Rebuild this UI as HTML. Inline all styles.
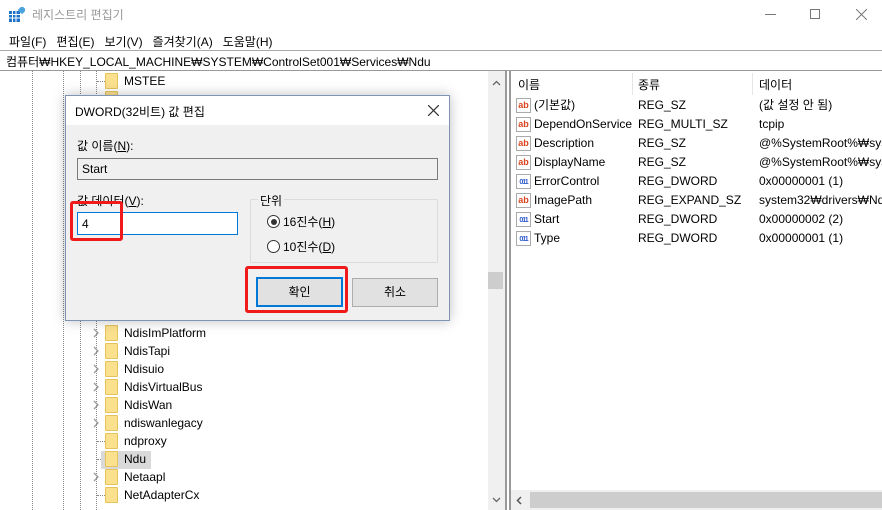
<!DOCTYPE html><html><head><meta charset="utf-8"><style>
*{margin:0;padding:0;box-sizing:border-box}
body{width:882px;height:510px;overflow:hidden;background:#fff;font-family:"Liberation Sans","Noto Sans CJK KR",sans-serif;font-size:12px;color:#000;position:relative}
.a{position:absolute;white-space:nowrap}
.g{color:#999}
.row{position:absolute;height:18px;line-height:18px;white-space:nowrap}
.fold{position:absolute;width:13px;height:16px;background:#fbe08e;border:1px solid #e6c25a;border-radius:1px}
.chev{position:absolute;width:8px;height:10px}
.dv{position:absolute;border-left:1px dotted #888;top:71px;height:439px;width:0}
.ico{position:absolute;width:15px;height:15px;font-size:9px;font-weight:bold;line-height:13px;text-align:center;border:1px solid #aaa;background:#fff}
</style></head><body>
<svg class="a" style="left:9px;top:7px" width="16" height="16"><rect x="0" y="4" width="11" height="11" fill="#1f73c8"/><path d="M0 7.5H11M0 11H11M3.5 4V15M7 4V15" stroke="#fff"/><rect x="10" y="0" width="6" height="6" fill="#4aa3df" transform="rotate(45 13 3)"/></svg>
<div class="a g" style="left:32px;top:6px;font-size:12px">레지스트리 편집기</div>
<div class="a" style="left:765px;top:14px;width:11px;border-top:1px solid #777"></div>
<div class="a" style="left:810px;top:9px;width:10px;height:10px;border:1px solid #777"></div>
<svg class="a" style="left:856px;top:9px" width="11" height="11"><path d="M0 0L11 11M11 0L0 11" stroke="#777"/></svg>
<div class="a" style="left:9px;top:33px">파일(F) &nbsp;&nbsp;편집(E) &nbsp;&nbsp;보기(V) &nbsp;&nbsp;즐겨찾기(A) &nbsp;&nbsp;도움말(H)</div>
<div class="a" style="left:0;top:50px;width:882px;height:1px;background:#aaa"></div>
<div class="a" style="left:6px;top:53px">컴퓨터₩HKEY_LOCAL_MACHINE₩SYSTEM₩ControlSet001₩Services₩Ndu</div>
<div class="a" style="left:0;top:70px;width:882px;height:1px;background:#999"></div>
<div class="dv" style="left:32px"></div><div class="dv" style="left:63px"></div><div class="dv" style="left:80px"></div><div class="dv" style="left:96px"></div>
<div class="a" style="left:505px;top:71px;width:2px;height:439px;background:#999"></div>
<div class="a" style="left:488px;top:71px;width:17px;height:439px;background:#f0f0f0"></div>
<div class="a" style="left:488px;top:272px;width:15px;height:17px;background:#cdcdcd"></div>
<svg class="a" style="left:492px;top:80px" width="9" height="6"><path d="M1 5L4.5 1.5L8 5" stroke="#666" fill="none" stroke-width="1.3"/></svg>
<svg class="a" style="left:492px;top:497px" width="9" height="6"><path d="M1 1L4.5 4.5L8 1" stroke="#666" fill="none" stroke-width="1.3"/></svg>
<div class="a" style="left:97px;top:81px;width:8px;border-top:1px dotted #888"></div>
<div class="fold" style="left:105px;top:73px"></div><div class="row" style="left:124px;top:72px">MSTEE</div>
<div class="fold" style="left:105px;top:91px"></div>
<div id="tree"></div>
<div class="a" style="left:509px;top:71px;width:2px;height:439px;background:#999"></div>
<div class="a" style="left:632px;top:73px;width:1px;height:22px;background:#e5e5e5"></div>
<div class="a" style="left:752px;top:73px;width:1px;height:22px;background:#e5e5e5"></div>
<div class="a" style="left:518px;top:76px">이름</div><div class="a" style="left:638px;top:76px">종류</div><div class="a" style="left:759px;top:76px">데이터</div>
<div id="rows"></div>
<div class="a" style="left:511px;top:490px;width:371px;height:20px;background:#f0f0f0"></div>
<div class="a" style="left:530px;top:492px;width:352px;height:16px;background:#cdcdcd"></div>
<svg class="a" style="left:516px;top:496px" width="6" height="9"><path d="M5 1L1.5 4.5L5 8" stroke="#555" fill="none" stroke-width="1.5"/></svg>
<div class="a" style="left:65px;top:95px;width:385px;height:226px;background:#f0f0f0;border:1px solid #7f93b5;box-shadow:0 0 12px rgba(0,0,0,.25)"></div>
<div class="a" style="left:66px;top:96px;width:383px;height:29px;background:#fff"></div>
<div class="a" style="left:75px;top:103px;font-size:12px">DWORD(32비트) 값 편집</div>
<svg class="a" style="left:428px;top:105px" width="11" height="11"><path d="M0 0L11 11M11 0L0 11" stroke="#333" stroke-width="1.2"/></svg>
<div class="a" style="left:77px;top:137px">값 이름(<u>N</u>):</div>
<div class="a" style="left:77px;top:158px;width:361px;height:22px;border:1px solid #7a7a7a;background:#f0f0f0;padding:3px 4px">Start</div>
<div class="a" style="left:77px;top:192px">값 데이터(<u>V</u>):</div>
<div class="a" style="left:77px;top:212px;width:161px;height:23px;border:1px solid #0078d7;background:#fff;padding:4px 4px">4</div>
<div class="a" style="left:70px;top:201px;width:53px;height:40px;border:3px solid #f01a1a;border-radius:3px"></div>
<div class="a" style="left:250px;top:199px;width:188px;height:64px;border:1px solid #dcdcdc"></div>
<div class="a" style="left:258px;top:192px;background:#f0f0f0;padding:0 2px">단위</div>
<div class="a" style="left:267px;top:215px;width:13px;height:13px;border:1px solid #333;border-radius:50%;background:#fff"><div style="margin:2.5px;width:6px;height:6px;border-radius:50%;background:#333"></div></div>
<div class="a" style="left:283px;top:213px">16진수(<u>H</u>)</div>
<div class="a" style="left:267px;top:240px;width:13px;height:13px;border:1px solid #333;border-radius:50%;background:#fff"></div>
<div class="a" style="left:283px;top:238px">10진수(<u>D</u>)</div>
<div class="a" style="left:245px;top:266px;width:103px;height:47px;border:3px solid #f01a1a;border-radius:3px"></div>
<div class="a" style="left:256px;top:277px;width:87px;height:30px;border:2px solid #0078d7;background:#e1e1e1;text-align:center;line-height:26px">확인</div>
<div class="a" style="left:352px;top:278px;width:86px;height:29px;border:1px solid #adadad;background:#e1e1e1;text-align:center;line-height:27px">취소</div>
<script>
var t=[["NdisImPlatform",1],["NdisTapi",1],["Ndisuio",1],["NdisVirtualBus",1],["NdisWan",1],["ndiswanlegacy",1],["ndproxy",0],["Ndu",0],["Netaapl",1],["NetAdapterCx",0]];
var h="";t.forEach(function(r,i){var y=324+i*18;
if(r[1])h+='<svg class="chev" style="left:92px;top:'+(y+4)+'px" width="8" height="10"><path d="M2 1L6 5L2 9" stroke="#999" fill="none" stroke-width="1.3"/></svg>';
else h+='<div class="a" style="left:97px;top:'+(y+9)+'px;width:8px;border-top:1px dotted #888"></div>';
if(r[0]=="Ndu")h+='<div class="a" style="left:101px;top:'+(y+1)+'px;width:50px;height:18px;background:#d9d9d9"></div>';
h+='<div class="fold" style="left:105px;top:'+(y+1)+'px"></div><div class="row" style="left:124px;top:'+y+'px">'+r[0]+'</div>';});
document.getElementById("tree").outerHTML=h;
var d=[["ab","(기본값)","REG_SZ","(값 설정 안 됨)"],["ab","DependOnService","REG_MULTI_SZ","tcpip"],["ab","Description","REG_SZ","@%SystemRoot%₩system32"],["ab","DisplayName","REG_SZ","@%SystemRoot%₩system32"],["01","ErrorControl","REG_DWORD","0x00000001 (1)"],["ab","ImagePath","REG_EXPAND_SZ","system32₩drivers₩Ndu.sys"],["01","Start","REG_DWORD","0x00000002 (2)"],["01","Type","REG_DWORD","0x00000001 (1)"]];
h="";d.forEach(function(r,i){var y=96+i*19;
h+='<div class="ico" style="left:516px;top:'+(y+2)+'px;color:'+(r[0]=="ab"?"#d9421c":"#2b57c8")+'">'+(r[0]=="ab"?"ab":"<span style=\'font-size:7px;letter-spacing:-1px\'>011</span>")+'</div>';
h+='<div class="row" style="left:534px;top:'+y+'px">'+r[1]+'</div><div class="row" style="left:638px;top:'+y+'px">'+r[2]+'</div><div class="row" style="left:759px;top:'+y+'px">'+r[3]+'</div>';});
document.getElementById("rows").outerHTML=h;
</script>
</body></html>
